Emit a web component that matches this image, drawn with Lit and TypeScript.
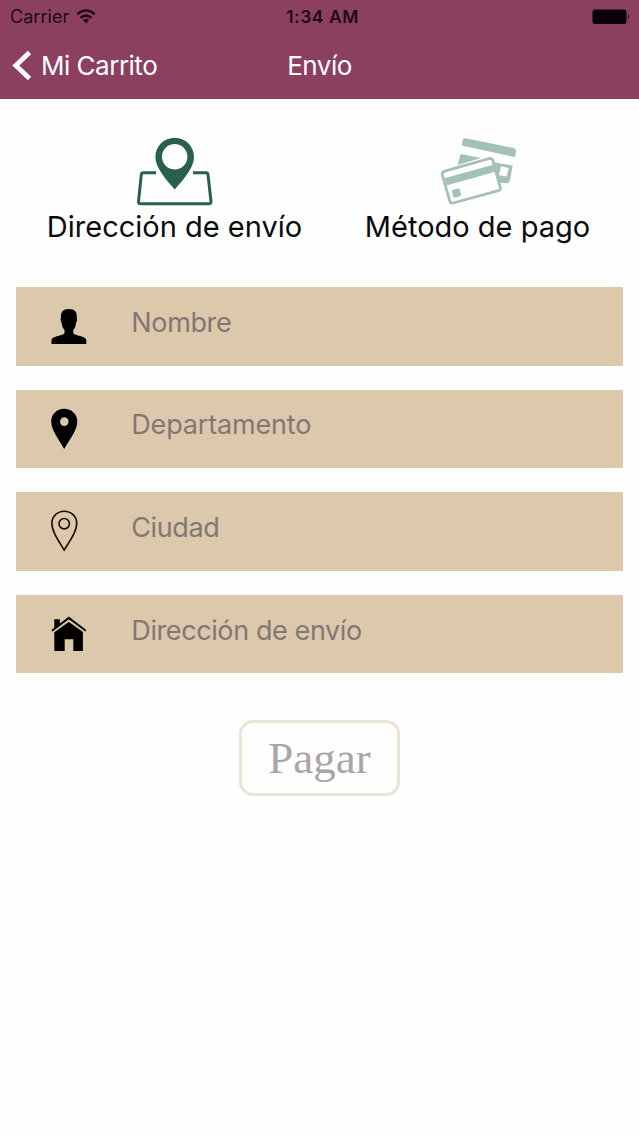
import { LitElement, html, css, svg } from "lit";
import { customElement } from "lit/decorators.js";

const person = svg`<svg class="icon" viewBox="0 0 36 36" width="36" height="36">
  <path d="M10 10C9.500 4 12 1 17.900 1S26.300 4 25.800 10C26.300 10.500 26.200 13.500 25.100 14.500C24.900 18 24 20 22.300 21.800V25.200C24 28 34.500 27.500 35.300 32V36H.5V32C1.300 27.500 11.800 28 13.500 25.200V21.800C11.800 20 10.900 18 10.600 14.500C9.500 13.500 9.400 10.500 10 10Z"/></svg>`;
const pin = svg`<svg class="icon" viewBox="0 0 36 42" width="36" height="42">
  <path fill-rule="evenodd" d="M13.200 .8C20.500 .8 26.300 6.300 26.300 13.300C26.300 22 19.500 30 13.200 41C7 30 .2 22 .2 13.300C.2 6.300 6 .8 13.200 .8ZM13.300 9.300a4.300 4.300 0 1 0 0 8.600a4.300 4.300 0 1 0 0-8.600Z"/></svg>`;
const pinOutline = svg`<svg class="icon" viewBox="0 0 36 42" width="36" height="42">
  <g fill="none" stroke="#1c0a04" stroke-width="1.600"><path d="M13.200 1.200C20 1.200 25.700 6.500 25.700 13.200C25.700 21.500 19.200 30.300 13.200 40C7.200 30.300 .9 21.500 .9 13.200C.9 6.500 6.500 1.200 13.200 1.200Z"/><circle cx="13.200" cy="13.700" r="5.200"/></g></svg>`;
const house = svg`<svg class="icon" viewBox="0 0 36 36" width="36" height="36">
  <path d="M3.300 13V3.200H8.800V7.500L18 1.900L31.900 14.800V35H22.300V23.300H13.700V35H3.300Z"/>
  <path d="M1.700 16.200L17.800 4.600L34 16.200" fill="none" stroke="#dbc7aa" stroke-width="2"/>
  <path d="M1 14.800L17.800 1.700L34.800 14.800" fill="none" stroke="#100804" stroke-width="1.900"/></svg>`;

const fields = [
  { icon: person, label: "Nombre", cls: "name" },
  { icon: pin, label: "Departamento", cls: "region" },
  { icon: pinOutline, label: "Ciudad", cls: "city" },
  { icon: house, label: "Dirección de envío", cls: "address" },
];

@customElement("app-root")
export class AppRoot extends LitElement {
  static styles = css`
    :host { display: block; height: 1136px; background: #fefefe; font-family: Inter, "Liberation Sans", sans-serif; overflow: hidden; }
    * { box-sizing: border-box; }
    svg { display: block; flex: none; }
    .top { height: 99px; background: #8b405f; border-bottom: 1px solid #85405c; }
    .status { height: 33px; display: grid; grid-template-columns: 1fr auto 1fr; align-items: center; padding: 0 8px 0 10px; color: #210a17; font-size: 18px; }
    .carrier { display: flex; align-items: center; gap: 7px; letter-spacing: .05px; }
    .time { font-weight: 600; font-size: 17.500px; letter-spacing: .5px; padding-left: 4px; }
    .battery { justify-self: end; }
    .nav { height: 65px; display: grid; grid-template-columns: 1fr auto 1fr; align-items: center; padding: 0 12px; color: #fff; font-size: 26px; }
    .back { display: flex; align-items: center; gap: 9px; letter-spacing: -.5px; }
    .title { letter-spacing: -.5px; }
    .tabs { display: grid; grid-template-columns: 349px 257px; height: 188px; padding-top: 38px; }
    .tab { display: flex; flex-direction: column; align-items: center; font-size: 29px; line-height: 36px; color: #0b0b0d; white-space: nowrap; gap: 3px; }
    .form { display: flex; flex-direction: column; gap: 24px; padding: 0 16px; }
    .field { height: 78.600px; display: flex; align-items: center; padding-left: 35px; background: #dcc8ab; color: #827873; font-size: 27px; }
    .field span { margin-left: 44.300px; padding-bottom: 8px; }
    .name { letter-spacing: -.35px; }
    .region { letter-spacing: -.18px; }
    .city { letter-spacing: -.4px; }
    .address { letter-spacing: -.4px; }
    .button { width: 161px; height: 76px; margin: 47px auto 0; border: 3px solid #ece4d5; border-radius: 14px; display: flex; align-items: center; justify-content: center; font: 45px "Liberation Serif", serif; color: #aaa5a7; }
  `;

  render() {
    return html`
      <header class="top">
        <div class="status">
          <div class="carrier"><span>Carrier</span>
            <svg viewBox="0 0 20 15" width="20" height="15"><g fill="none" stroke="#210a17" stroke-width="2.600"><path d="M1.300 5.200Q10 -2.200 18.700 5.200"/><path d="M4.500 8.800Q10 4.300 15.500 8.800"/></g><path d="M6.800 11Q10 8.500 13.200 11L10 14.400Z" fill="#210a17"/></svg>
          </div>
          <div class="time">1:34 AM</div>
          <svg class="battery" viewBox="0 0 39 16" width="39" height="16"><rect x=".5" y=".5" width="34" height="14.500" rx="2.500" fill="#0a0207"/><path d="M36 5Q38.500 7.700 36 10.400Z" fill="#210a17"/></svg>
        </div>
        <div class="nav">
          <div class="back"><svg viewBox="0 0 20 32" width="20" height="32"><path d="M17.500 2.500L3.800 15.500L17.500 28.500" fill="none" stroke="#fff" stroke-width="4.800"/></svg><span>Mi Carrito</span></div>
          <div class="title">Envío</div>
        </div>
      </header>
      <div class="tabs">
        <div class="tab">
          <svg viewBox="136 137 78 69" width="78" height="69">
            <path d="M156 172.800H143.500Q141.600 172.800 141.300 174.700L138.500 201.500Q138.300 203.700 140.500 203.700H209Q211.200 203.700 211 201.500L208 174.700Q207.800 172.800 206 172.800H193" fill="none" stroke="#28604d" stroke-width="3"/>
            <path fill="#28604d" fill-rule="evenodd" d="M174.700 137.800C185.500 137.800 194 146.200 194 157C194 168 183 180 174.700 189.500C166.500 180 155.400 168 155.400 157C155.400 146.200 163.900 137.800 174.700 137.800ZM174.700 144a12.700 12.700 0 1 0 0 25.400a12.700 12.700 0 1 0 0-25.400Z"/>
          </svg>
          <span>Dirección de envío</span>
        </div>
        <div class="tab">
          <svg viewBox="439 137 78 69" width="78" height="69">
            <g fill="#a3c1b8"><path d="M465.500 138.300L513 147.800Q516.300 148.600 516 151.500L514.900 157L461.700 145.500L462.500 140.500Q463 138 465.500 138.300Z"/>
            <path d="M460.500 154L481 158L457.800 165Z"/>
            <path fill-rule="evenodd" d="M493.500 162.300L512.800 165.500L509.800 180.500Q509 183.500 506.500 183.300L499 182.500ZM501 166.300L499 175.300L506.800 176.600L508.700 168Z"/>
            <path d="M444.500 178.300L494 164.500L496.200 171.500L446.500 185.500Z"/>
            <rect x="452.500" y="189" width="8" height="8" rx="1.500" transform="rotate(-13 456.500 193)"/></g>
            <path d="M444.700 171.200L489.500 158.500Q492 157.800 492.700 160.200L500.300 187.500Q501 190 498.500 190.700L453.200 203Q450.500 203.700 449.800 201L442.300 175Q441.600 172 444.700 171.200Z" fill="none" stroke="#a3c1b8" stroke-width="2.800"/>
          </svg>
          <span>Método de pago</span>
        </div>
      </div>
      <main class="form">
        ${fields.map((f) => html`<div class="field">${f.icon}<span class=${f.cls}>${f.label}</span></div>`)}
      </main>
      <div class="button">Pagar</div>
    `;
  }
}
